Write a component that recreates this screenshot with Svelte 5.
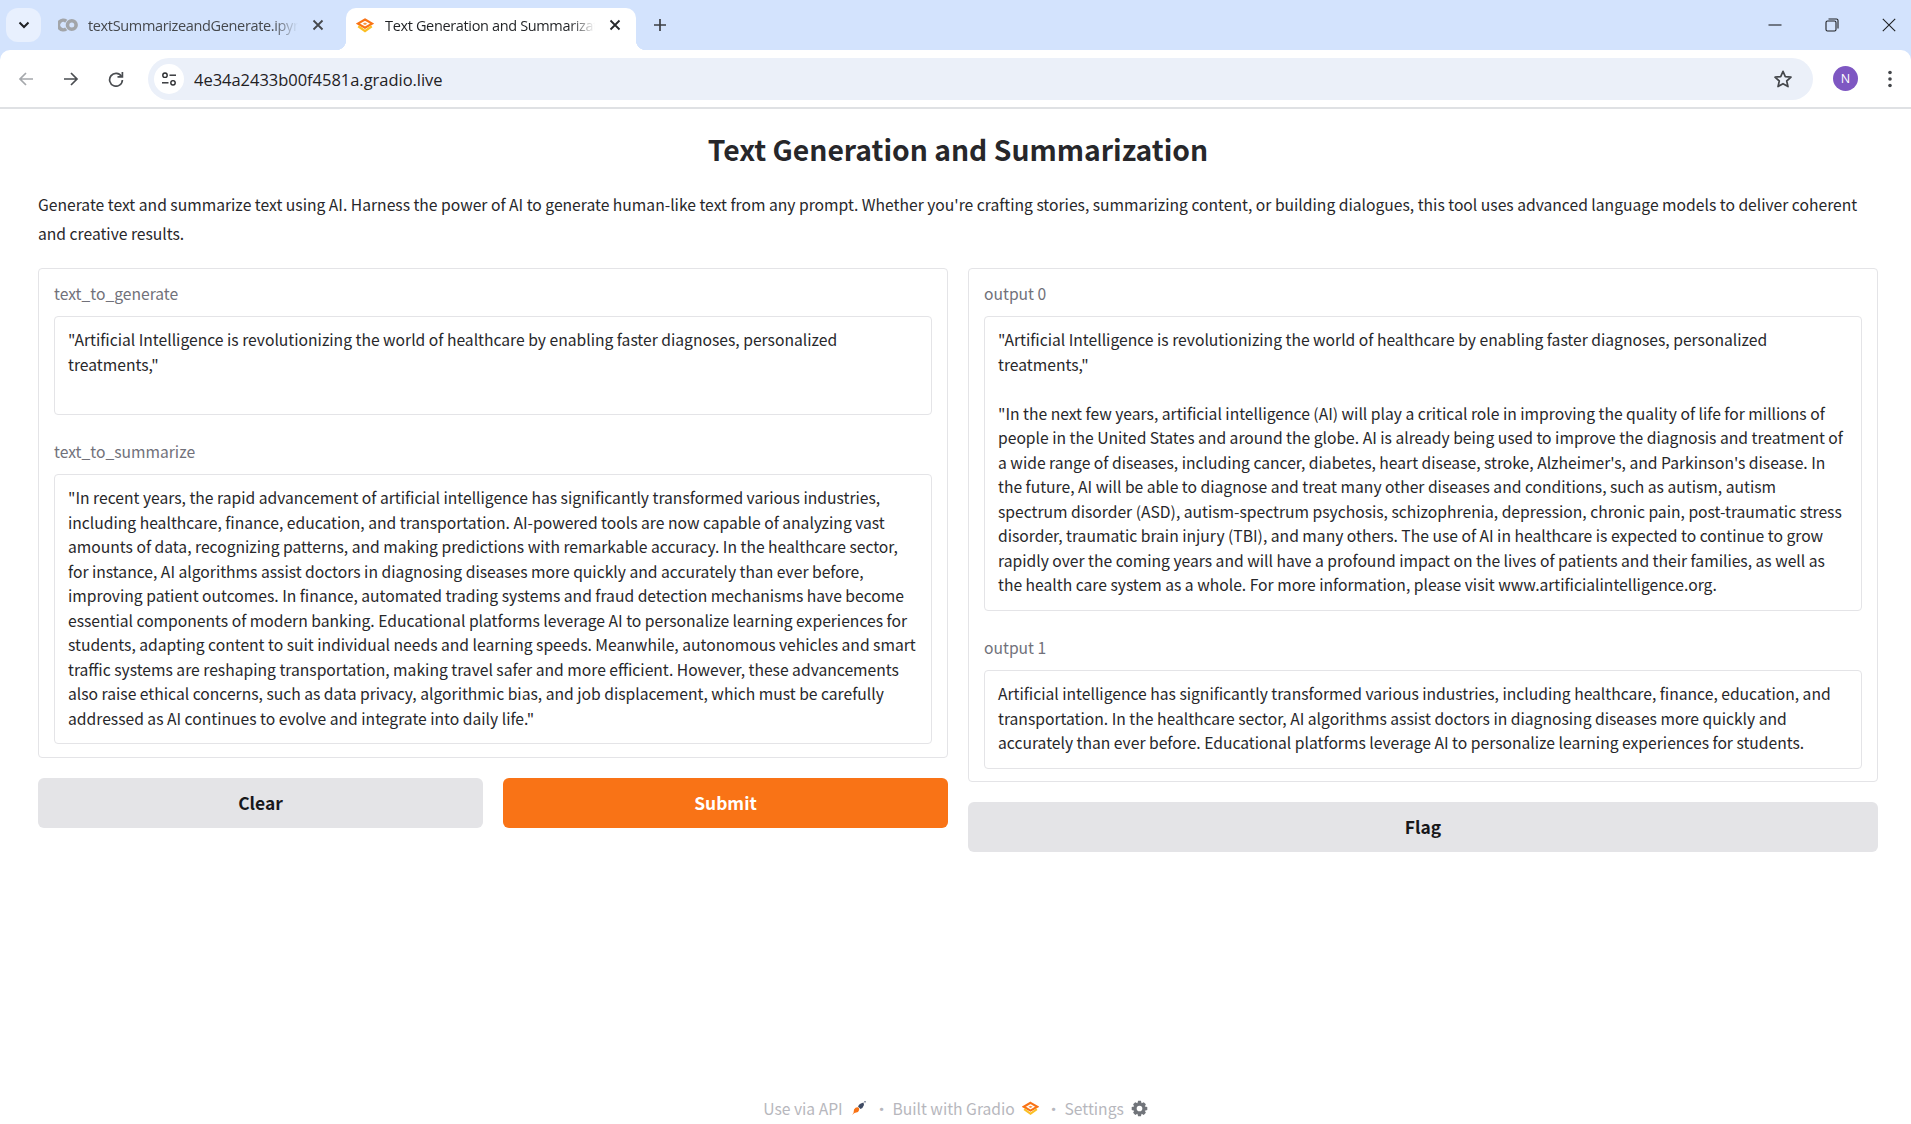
<script>
  const prompt = ['"Artificial Intelligence is revolutionizing the world of healthcare by enabling faster diagnoses, personalized', 'treatments,"'];
  const summarize = [
    '"In recent years, the rapid advancement of artificial intelligence has significantly transformed various industries,',
    'including healthcare, finance, education, and transportation. AI-powered tools are now capable of analyzing vast',
    'amounts of data, recognizing patterns, and making predictions with remarkable accuracy. In the healthcare sector,',
    'for instance, AI algorithms assist doctors in diagnosing diseases more quickly and accurately than ever before,',
    'improving patient outcomes. In finance, automated trading systems and fraud detection mechanisms have become',
    'essential components of modern banking. Educational platforms leverage AI to personalize learning experiences for',
    'students, adapting content to suit individual needs and learning speeds. Meanwhile, autonomous vehicles and smart',
    'traffic systems are reshaping transportation, making travel safer and more efficient. However, these advancements',
    'also raise ethical concerns, such as data privacy, algorithmic bias, and job displacement, which must be carefully',
    'addressed as AI continues to evolve and integrate into daily life."'
  ];
  const output0 = [
    '"Artificial Intelligence is revolutionizing the world of healthcare by enabling faster diagnoses, personalized',
    'treatments,"',
    '\u00a0',
    '"In the next few years, artificial intelligence (AI) will play a critical role in improving the quality of life for millions of',
    'people in the United States and around the globe. AI is already being used to improve the diagnosis and treatment of',
    "a wide range of diseases, including cancer, diabetes, heart disease, stroke, Alzheimer's, and Parkinson's disease. In",
    'the future, AI will be able to diagnose and treat many other diseases and conditions, such as autism, autism',
    'spectrum disorder (ASD), autism-spectrum psychosis, schizophrenia, depression, chronic pain, post-traumatic stress',
    'disorder, traumatic brain injury (TBI), and many others. The use of AI in healthcare is expected to continue to grow',
    'rapidly over the coming years and will have a profound impact on the lives of patients and their families, as well as',
    'the health care system as a whole. For more information, please visit www.artificialintelligence.org.'
  ];
  const output1 = [
    'Artificial intelligence has significantly transformed various industries, including healthcare, finance, education, and',
    'transportation. In the healthcare sector, AI algorithms assist doctors in diagnosing diseases more quickly and',
    'accurately than ever before. Educational platforms leverage AI to personalize learning experiences for students.'
  ];
</script>

{#snippet gradioLogo(w, h)}
  <svg width={w} height={h} viewBox="0 0 24 20" fill="none" stroke-linejoin="miter">
    <path d="M12 2 L21.5 7.5 L12 13 L2.5 7.5 Z" stroke="#f97316" stroke-width="3"/>
    <path d="M3 11 L12 17.5 L21 11" stroke="#fbbf24" stroke-width="3"/>
    <path d="M12 6 L15 7.7 L12 9.4 L9 7.7 Z" fill="#fb923c"/>
  </svg>
{/snippet}

{#snippet field(label, lines)}
  <div class="field">
    <div class="label">{label}</div>
    <div class="box">
      {#each lines as l}<div class="line">{l}</div>{/each}
    </div>
  </div>
{/snippet}

<div class="page">
  <div class="chrome">
    <header class="tabstrip">
      <div class="tablist"><svg width="12" height="8" viewBox="0 0 12 8"><path d="M1.5 1.5 L6 6 L10.5 1.5" fill="none" stroke="#1f2124" stroke-width="2"/></svg></div>
      <div class="tab inactive">
        <svg class="fav" width="20" height="14" viewBox="0 0 20 14" fill="none" stroke="#a2a5a9" stroke-width="3.6"><path d="M8.2 3.2 A4.8 4.8 0 1 0 8.2 10.8"/><circle cx="13.8" cy="7" r="4.3"/></svg>
        <span class="tabtext">textSummarizeandGenerate.ipynb</span>
        <svg class="tabx" width="12" height="12" viewBox="0 0 12 12"><path d="M1.5 1.5 L10.5 10.5 M10.5 1.5 L1.5 10.5" stroke="#45484c" stroke-width="1.8"/></svg>
      </div>
      <div class="tab active">
        <span class="fav2">{@render gradioLogo(18, 15)}</span>
        <span class="tabtext">Text Generation and Summarization</span>
        <svg class="tabx" width="12" height="12" viewBox="0 0 12 12"><path d="M1.5 1.5 L10.5 10.5 M10.5 1.5 L1.5 10.5" stroke="#26282b" stroke-width="1.8"/></svg>
      </div>
      <svg class="plus" width="14" height="14" viewBox="0 0 14 14"><path d="M7 1 V13 M1 7 H13" stroke="#3c3f43" stroke-width="1.7"/></svg>
      <div class="winctl">
        <svg width="14" height="14" viewBox="0 0 14 14"><path d="M0.5 7 H13.5" stroke="#1f2124" stroke-width="1.1"/></svg>
        <svg width="14" height="14" viewBox="0 0 14 14" fill="none" stroke="#1f2124" stroke-width="1.1"><rect x="1" y="3" width="10" height="10" rx="1.5"/><path d="M3.5 1 H11.5 Q13 1 13 2.5 V10.5"/></svg>
        <svg width="14" height="14" viewBox="0 0 14 14"><path d="M0.8 0.8 L13.2 13.2 M13.2 0.8 L0.8 13.2" stroke="#1f2124" stroke-width="1.1"/></svg>
      </div>
    </header>

    <nav class="toolbar">
      <svg class="nav" width="16" height="16" viewBox="0 0 16 16" fill="none" stroke="#a5a8ac" stroke-width="1.7"><path d="M15 8 H2 M8 2 L2 8 L8 14"/></svg>
      <svg class="nav" width="16" height="16" viewBox="0 0 16 16" fill="none" stroke="#4a4d51" stroke-width="1.7"><path d="M1 8 H14 M8 2 L14 8 L8 14"/></svg>
      <svg class="nav reload" width="16" height="16" viewBox="0 0 16 16" fill="none" stroke="#4a4d51" stroke-width="1.7"><path d="M13.5 5.5 A6.4 6.4 0 1 0 14.4 9"/><path d="M14.4 1 V5.9 H9.5"/></svg>
      <div class="omnibox">
        <span class="siteinfo">
          <svg width="16" height="16" viewBox="0 0 16 16" fill="none" stroke="#2b2d30" stroke-width="1.4"><circle cx="4" cy="4.2" r="2.2"/><path d="M8.5 4.2 H15"/><circle cx="12" cy="11.8" r="2.2"/><path d="M1 11.8 H7.5"/></svg>
        </span>
        <span class="url">4e34a2433b00f4581a.gradio.live</span>
        <svg class="star" width="20" height="20" viewBox="0 0 20 20" fill="none" stroke="#44474b" stroke-width="1.7" stroke-linejoin="round"><path d="M10 2.4 L12.3 7.6 L18 8.2 L13.7 12 L15 17.6 L10 14.7 L5 17.6 L6.3 12 L2 8.2 L7.7 7.6 Z"/></svg>
      </div>
      <div class="avatar">N</div>
      <svg class="dots" width="4" height="18" viewBox="0 0 4 18" fill="#44474b"><circle cx="2" cy="2.5" r="1.8"/><circle cx="2" cy="9" r="1.8"/><circle cx="2" cy="15.5" r="1.8"/></svg>
    </nav>
  </div>

  <main class="gradio">
    <h1>Text Generation and Summarization</h1>
    <p class="desc">Generate text and summarize text using AI. Harness the power of AI to generate human-like text from any prompt. Whether you're crafting stories, summarizing content, or building dialogues, this tool uses advanced language models to deliver coherent<br />and creative results.</p>

    <div class="columns">
      <section class="col">
        <div class="card">
          {@render field('text_to_generate', prompt)}
          {@render field('text_to_summarize', summarize)}
        </div>
        <div class="buttons">
          <button class="btn">Clear</button>
          <button class="btn primary">Submit</button>
        </div>
      </section>
      <section class="col">
        <div class="card">
          {@render field('output 0', output0)}
          {@render field('output 1', output1)}
        </div>
        <button class="btn">Flag</button>
      </section>
    </div>
  </main>

  <footer class="foot">
    <span>Use via API</span>
    <svg class="rocket" width="16" height="16" viewBox="0 0 16 16"><path d="M1 15 L2.5 13 L3 9.5 Q5 6.5 7.5 7.5 Q9 9.5 7 12 L3.5 13 Z" fill="#f97316"/><path d="M7 6.5 Q8 3.5 12.5 2.5 L13 5 Q12 8 9.5 9 Z" fill="#3f4a63"/><path d="M13 1 L15 1 L14 3.5 Z" fill="#7b8396"/></svg>
    <span class="dot">·</span>
    <span>Built with Gradio</span>
    {@render gradioLogo(17, 15)}
    <span class="dot">·</span>
    <span>Settings</span>
    <svg width="17" height="17" viewBox="0 0 24 24" fill="#71747a"><path fill-rule="evenodd" d="M10 1 H14 L15 4.5 L18 3 L21 6 L19.5 9 L23 10 V14 L19.5 15 L21 18 L18 21 L15 19.5 L14 23 H10 L9 19.5 L6 21 L3 18 L4.5 15 L1 14 V10 L4.5 9 L3 6 L6 3 L9 4.5 Z M12 8 A4 4 0 1 0 12 16 A4 4 0 1 0 12 8 Z"/></svg>
  </footer>
</div>

<style>
  :global(body) { margin: 0; background: #fff; }
  .page {
    width: 1911px; height: 1124px; overflow: hidden;
    display: flex; flex-direction: column; position: relative;
    font-family: "Noto Sans CJK SC", "Noto Sans", sans-serif; color: #27272a;
  }
  .chrome { background: #d3e3fd; flex: none; }
  .tabstrip { height: 50px; display: flex; align-items: center; }
  .tablist {
    width: 35px; height: 34px; margin-left: 6px; background: #e8f0fe; border-radius: 12px;
    display: flex; align-items: center; justify-content: center; flex: none;
  }
  .tab {
    box-sizing: border-box; display: flex; align-items: center; flex: none;
    font-size: 14.5px; font-family: "Open Sans", sans-serif; letter-spacing: -0.35px;
  }
  .tab.inactive { width: 305px; height: 42px; padding-left: 17px; color: #45484c; }
  .tab.active {
    width: 290px; height: 42px; margin-top: 8px; padding: 0 0 8px 10px; position: relative;
    background: #fff; border-radius: 10px 10px 0 0; color: #1f2124;
  }
  .tab.active::before, .tab.active::after {
    content: ""; position: absolute; bottom: 0; width: 10px; height: 10px;
  }
  .tab.active::before { left: -10px; background: radial-gradient(circle at 0 0, transparent 10px, #fff 10.5px); }
  .tab.active::after { right: -10px; background: radial-gradient(circle at 100% 0, transparent 10px, #fff 10.5px); }
  .fav { margin-right: 10px; flex: none; }
  .fav2 { margin-right: 11px; flex: none; display: flex; }
  .tabtext {
    width: 210px; overflow: hidden; white-space: nowrap; flex: none;
    mask-image: linear-gradient(to right, #000 88%, transparent);
    -webkit-mask-image: linear-gradient(to right, #000 88%, transparent);
  }
  .tabx { margin-left: 14px; flex: none; }
  .plus { margin-left: 17px; flex: none; }
  .winctl { margin-left: auto; margin-right: 15px; display: flex; gap: 43px; }
  .toolbar {
    height: 59px; box-sizing: border-box; background: #fff;
    border-radius: 10px 10px 0 0; display: flex; align-items: center; padding-left: 18px;
    border-bottom: 2px solid #dfe1e4;
  }
  .nav { margin-right: 29px; flex: none; }
  .nav.reload { margin-right: 24px; }
  .omnibox {
    width: 1665px; height: 42px; background: #ebf0f9; border-radius: 21px; display: flex; align-items: center; flex: none;
  }
  .siteinfo {
    width: 30px; height: 30px; margin-left: 6px; background: #fff; border-radius: 15px; display: flex; align-items: center; justify-content: center; flex: none;
  }
  .url { margin-left: 10px; padding-top: 1px; font-family: "Open Sans", sans-serif; font-size: 16.5px; color: #1f2124; letter-spacing: -0.03px; }
  .star { margin-left: auto; margin-right: 20px; }
  .avatar {
    width: 25px; height: 25px; margin-left: 20px; border-radius: 50%; background: #7e57c2; color: #fff; flex: none;
    font: 12.5px/25px "Open Sans", sans-serif; text-align: center;
  }
  .dots { margin-left: 30px; flex: none; }
  .gradio { flex: 1; padding: 0 33px 0 38px; box-sizing: border-box; min-height: 0; }
  h1 { margin: 20px 0 0; font-size: 28.3px; line-height: 40px; font-weight: 600; text-align: center; color: #27272a; }
  .desc { margin: 21px 0 0; font-size: 15.67px; line-height: 29px; color: #27272a; }
  .columns { display: grid; grid-template-columns: 910px 910px; column-gap: 20px; margin-top: 19.5px; align-items: start; }
  .col { display: flex; flex-direction: column; gap: 20px; }
  .card { border: 1px solid #e4e4e7; border-radius: 4px; padding: 15px 15px 12.5px; display: flex; flex-direction: column; gap: 27px; }
  .label { font-size: 15.67px; line-height: 20px; color: #71717a; margin-bottom: 12.5px; }
  .box { border: 1px solid #e4e4e7; border-radius: 4px; padding: 11px 13px 12px; min-height: 73.5px; }
  .line { font-size: 15.67px; line-height: 24.5px; white-space: nowrap; color: #27272a; }
  .buttons { display: grid; grid-template-columns: 445px 445px; column-gap: 20px; }
  .btn {
    height: 50px; border: 0; border-radius: 6px; background: #e4e4e7; color: #18181b; width: 100%;
    font: 600 17.4px/24px "Noto Sans CJK SC", sans-serif; padding: 0;
  }
  .btn.primary { background: #f97316; color: #fff; }
  .foot {
    position: absolute; left: 0; right: 0; bottom: 0; height: 32px; display: flex; align-items: center; justify-content: center; gap: 7px;
    color: #b7b7bd; font-size: 15.67px;
  }
  .rocket { margin-left: 1px; }
  .dot { margin: 0 -4px 0 0; }
</style>
